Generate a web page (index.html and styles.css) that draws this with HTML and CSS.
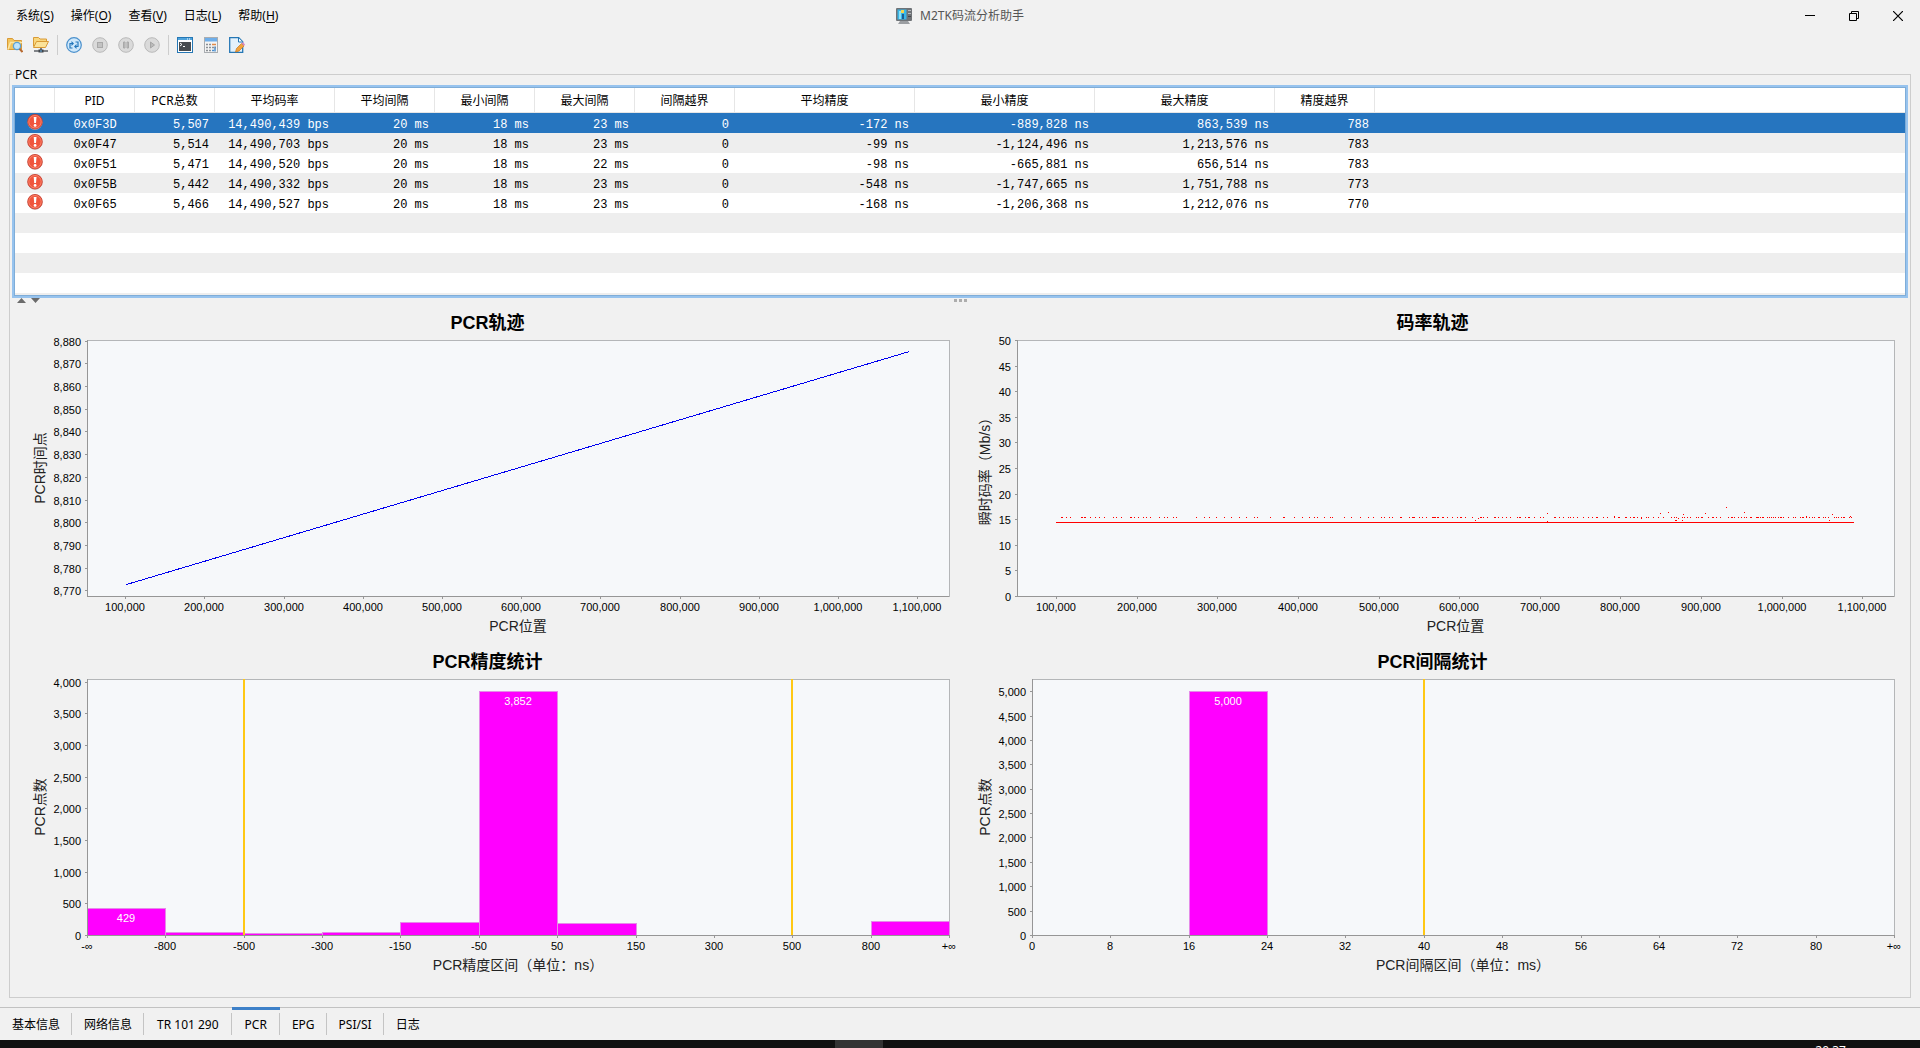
FILE: index.html
```html
<!DOCTYPE html>
<html lang="zh-CN">
<head>
<meta charset="utf-8">
<title>M2TK码流分析助手</title>
<link rel="stylesheet" href="styles.css">
</head>
<body>
<header class="titlebar">
  <nav class="menu" aria-label="菜单">
    <button type="button">系统(<u>S</u>)</button>
    <button type="button">操作(<u>O</u>)</button>
    <button type="button">查看(<u>V</u>)</button>
    <button type="button">日志(<u>L</u>)</button>
    <button type="button">帮助(<u>H</u>)</button>
  </nav>
  <h1 class="app-title">
    <svg width="16" height="16" viewBox="0 0 16 16" aria-hidden="true">
      <rect x="0" y="0" width="16" height="13" rx="1" fill="#6f7377"/>
      <rect x="1.500" y="1.500" width="9" height="10" fill="#38b6e8"/>
      <rect x="3" y="3" width="2" height="8" fill="#8be0f7"/><rect x="5" y="2" width="3" height="3" fill="#f2d34c"/><rect x="6" y="6" width="2" height="5" fill="#1a5e93"/>
      <rect x="12" y="2" width="3" height="1" fill="#b8bcc0"/><rect x="12" y="5" width="3" height="1" fill="#b8bcc0"/><rect x="12" y="8" width="3" height="1" fill="#45494d"/>
      <path d="M4 13h8l2 3H2z" fill="#9b9ea2"/>
    </svg>
    <span>M2TK码流分析助手</span>
  </h1>
  <div class="window-controls">
    <button type="button" aria-label="最小化"><svg width="10" height="10" viewBox="0 0 10 10"><path d="M0 4.500h10" stroke="#000"/></svg></button>
    <button type="button" aria-label="还原"><svg width="10" height="10" viewBox="0 0 10 10" fill="none" stroke="#000"><path d="M.5 2.500h7v7h-7zM2.500 2.500v-2h7v7h-2"/></svg></button>
    <button type="button" aria-label="关闭"><svg width="10" height="10" viewBox="0 0 10 10"><path d="M0 0l10 10M10 0L0 10" stroke="#000" stroke-width="1.200"/></svg></button>
  </div>
</header>

<div class="toolbar" role="toolbar" aria-label="工具栏">
  <button type="button" aria-label="打开文件"><svg width="16" height="16" viewBox="0 0 16 16">
    <path d="M.5 12.500v-11h5l1.500 2h7.500v9z" fill="#f3c55d" stroke="#d99a36"/><path d="M1 12.500l2.500-7H15" fill="none" stroke="#fbe7a6" stroke-width="1.500"/>
    <circle cx="10" cy="9" r="3.600" fill="#bfe4fa" stroke="#5ba1d4" stroke-width="1.300"/><path d="M12.500 11.800l3 3.200" stroke="#b86b32" stroke-width="2"/></svg></button>
  <button type="button" aria-label="打开网络流"><svg width="16" height="16" viewBox="0 0 16 16">
    <path d="M.5 9.500v-9h5L7 2h6.500v2" fill="#f8d77e" stroke="#d99a36"/><path d="M.5 10.500l3-6h12l-3 6z" fill="#fbe39a" stroke="#d99a36"/>
    <path d="M8 11v3M1 14h14" stroke="#5c6066" stroke-width="1.600"/><rect x="5.500" y="12.500" width="5" height="3" fill="#3e4349"/><path d="M7 14h2" stroke="#6db5ea"/></svg></button>
  <span class="divider"></span>
  <button type="button" aria-label="重新分析"><svg width="16" height="16" viewBox="0 0 16 16">
    <circle cx="8" cy="8" r="7.300" fill="#cfe8fb" stroke="#4a90cc" stroke-width="1.200"/>
    <path d="M6.500 11H4V6.500h2.500M9.500 5H12v4.500H9.500" fill="none" stroke="#2477bb" stroke-width="1.200"/><path d="M5.500 4l2.500 2.500L5.500 9zM10.500 7L8 9.500l2.500 2.500z" fill="#2477bb"/></svg></button>
  <button type="button" aria-label="停止" disabled><svg width="16" height="16" viewBox="0 0 16 16">
    <circle cx="8" cy="8" r="7.300" fill="#dadada" stroke="#b9b9b9"/><rect x="5.500" y="5.500" width="5" height="5" fill="#c2c2c2" stroke="#a8a8a8"/></svg></button>
  <button type="button" aria-label="暂停" disabled><svg width="16" height="16" viewBox="0 0 16 16">
    <circle cx="8" cy="8" r="7.300" fill="#dadada" stroke="#b9b9b9"/><path d="M5.500 5h1.500v6H5.500zM9 5h1.500v6H9z" fill="#c2c2c2" stroke="#a8a8a8"/></svg></button>
  <button type="button" aria-label="开始" disabled><svg width="16" height="16" viewBox="0 0 16 16">
    <circle cx="8" cy="8" r="7.300" fill="#dadada" stroke="#b9b9b9"/><path d="M6.500 5l4 3-4 3z" fill="#bababa" stroke="#a5a5a5"/></svg></button>
  <span class="divider"></span>
  <button type="button" aria-label="终端"><svg width="16" height="16" viewBox="0 0 16 16">
    <rect x=".5" y=".5" width="15" height="15" fill="#fff" stroke="#2577b5"/><rect x="1" y="1" width="14" height="2" fill="#4fa3dc"/><path d="M10 2h1M12 2h1" stroke="#fff"/>
    <rect x="2" y="5" width="12" height="9" fill="#484c50"/><path d="M3 6l2 1.500L3 9M6 9.500h2" fill="none" stroke="#fff"/></svg></button>
  <button type="button" aria-label="计算器"><svg width="16" height="16" viewBox="0 0 16 16">
    <rect x="1.500" y=".5" width="13" height="15" fill="#f4f4f4" stroke="#a9adb1"/><rect x="2" y="1" width="12" height="3.500" fill="#6eaeea"/>
    <path d="M3 7.500h2M6 7.500h2M3 10.500h2M6 10.500h2M3 13.500h2M6 13.500h2M9 10.500h2" stroke="#8a8f94" stroke-width="1.500"/><path d="M9 7.500h4M12 10.500h1" stroke="#e08a4a" stroke-width="1.500"/><path d="M9 13.500h2M12 9.500v5" stroke="#4a8fd0" stroke-width="1.500"/></svg></button>
  <button type="button" aria-label="编辑"><svg width="16" height="16" viewBox="0 0 16 16">
    <path d="M.7.7h9l4 4v10.600h-13z" fill="#e4f1fb" stroke="#2577b5" stroke-width="1.300"/><path d="M9.500 1v4h4" fill="#fff" stroke="#2577b5"/>
    <path d="M6.500 15l1-3.500 5-5 2.500 2.500L10 14z" fill="#f2a33c" stroke="#c9761c" stroke-width=".7"/><path d="M12.500 6.500L14 5l2 2.500L15 9z" fill="#d98bc0"/></svg></button>
</div>

<section class="group">
  <h2>PCR</h2>
  <div class="scroll-pane">
    <table class="pcr-table">
      <colgroup>
        <col class="c-icon"><col class="c-id"><col class="c-id"><col class="c-rate"><col class="c-mid"><col class="c-mid"><col class="c-mid"><col class="c-mid"><col class="c-wide"><col class="c-wide"><col class="c-wide"><col class="c-mid"><col>
      </colgroup>
      <thead>
        <tr><th></th><th>PID</th><th>PCR总数</th><th>平均码率</th><th>平均间隔</th><th>最小间隔</th><th>最大间隔</th><th>间隔越界</th><th>平均精度</th><th>最小精度</th><th>最大精度</th><th>精度越界</th><th></th></tr>
      </thead>
      <tbody>
        <tr class="selected"><td><svg class="alert" viewBox="0 0 16 16"><use href="#alert"/></svg></td><td>0x0F3D</td><td>5,507</td><td>14,490,439 bps</td><td>20 ms</td><td>18 ms</td><td>23 ms</td><td>0</td><td>-172 ns</td><td>-889,828 ns</td><td>863,539 ns</td><td>788</td><td></td></tr>
        <tr><td><svg class="alert" viewBox="0 0 16 16"><use href="#alert"/></svg></td><td>0x0F47</td><td>5,514</td><td>14,490,703 bps</td><td>20 ms</td><td>18 ms</td><td>23 ms</td><td>0</td><td>-99 ns</td><td>-1,124,496 ns</td><td>1,213,576 ns</td><td>783</td><td></td></tr>
        <tr><td><svg class="alert" viewBox="0 0 16 16"><use href="#alert"/></svg></td><td>0x0F51</td><td>5,471</td><td>14,490,520 bps</td><td>20 ms</td><td>18 ms</td><td>22 ms</td><td>0</td><td>-98 ns</td><td>-665,881 ns</td><td>656,514 ns</td><td>783</td><td></td></tr>
        <tr><td><svg class="alert" viewBox="0 0 16 16"><use href="#alert"/></svg></td><td>0x0F5B</td><td>5,442</td><td>14,490,332 bps</td><td>20 ms</td><td>18 ms</td><td>23 ms</td><td>0</td><td>-548 ns</td><td>-1,747,665 ns</td><td>1,751,788 ns</td><td>773</td><td></td></tr>
        <tr><td><svg class="alert" viewBox="0 0 16 16"><use href="#alert"/></svg></td><td>0x0F65</td><td>5,466</td><td>14,490,527 bps</td><td>20 ms</td><td>18 ms</td><td>23 ms</td><td>0</td><td>-168 ns</td><td>-1,206,368 ns</td><td>1,212,076 ns</td><td>770</td><td></td></tr>
        <tr><td colspan="13"></td></tr>
        <tr><td colspan="13"></td></tr>
        <tr><td colspan="13"></td></tr>
        <tr><td colspan="13"></td></tr>
      </tbody>
    </table>
  </div>
  <div class="splitter">
    <svg class="arrows" width="24" height="5" viewBox="0 0 24 5" fill="#6b6b6b" aria-hidden="true"><path d="M0 5l4.500-5L9 5zM14 0h9l-4.500 5z"/></svg>
    <svg width="13" height="3" viewBox="0 0 13 3" fill="#adadad" aria-hidden="true"><path d="M0 0h3v3H0zM5 0h3v3H5zM10 0h3v3h-3z"/></svg>
    <span></span>
  </div>
  <div class="charts">
    <svg class="chart" id="chart-track"></svg>
    <svg class="chart" id="chart-rate"></svg>
    <svg class="chart" id="chart-accuracy"></svg>
    <svg class="chart" id="chart-interval"></svg>
  </div>
</section>

<nav class="tabs" aria-label="视图">
  <button type="button">基本信息</button>
  <button type="button">网络信息</button>
  <button type="button" class="latin">TR 101 290</button>
  <button type="button" class="latin active">PCR</button>
  <button type="button">EPG</button>
  <button type="button">PSI/SI</button>
  <button type="button">日志</button>
</nav>
<footer class="taskbar"><span class="task"></span><time>20:37</time></footer>

<svg class="defs" width="0" height="0" aria-hidden="true">
  <symbol id="alert" viewBox="0 0 16 16">
    <circle cx="8" cy="8.300" r="7.500" fill="#c9c4c2"/>
    <circle cx="8" cy="7.700" r="7.300" fill="#f0553d" stroke="#c5392a" stroke-width=".8"/>
    <circle cx="8" cy="7.700" r="6.200" fill="none" stroke="#f98d76" stroke-width=".8"/>
    <path d="M6.700 3h2.800l-.5 6H7.200z" fill="#fff"/><circle cx="8.100" cy="11.400" r="1.400" fill="#fff"/>
  </symbol>
</svg>
<script src="charts.js"></script>
</body>
</html>
```
FILE: styles.css
```css
* { box-sizing: border-box; }
body {
  margin: 0;
  min-height: 100vh;
  display: flex;
  flex-direction: column;
  background: #f1f1f1;
  color: #000;
  font: 12px/16px "Noto Sans", "Noto Sans CJK SC", sans-serif;
}
button {
  margin: 0;
  padding: 0;
  border: 0;
  background: none;
  color: inherit;
  font: inherit;
}

/* title bar */
.titlebar {
  display: grid;
  grid-template-columns: 1fr auto 1fr;
  align-items: center;
  height: 32px;
}
.menu { display: flex; gap: 17px; padding-left: 16px; }
.menu u { text-underline-offset: 2px; }
.app-title {
  display: flex;
  align-items: center;
  gap: 8px;
  margin: 0;
  font-size: 12px;
  font-weight: normal;
  color: #555;
}
.window-controls { display: flex; justify-content: flex-end; }
.window-controls button { display: grid; place-items: center; width: 44px; height: 30px; }

/* toolbar */
.toolbar { display: flex; align-items: center; height: 26px; padding-left: 2px; }
.toolbar button { display: grid; place-items: center; width: 26px; height: 24px; }
.divider { width: 1px; height: 20px; margin: 0 3px; background: #cdcdcd; }

/* group box with its title set into the top border */
.group {
  flex: 1;
  display: flex;
  flex-direction: column;
  min-width: 0;
  margin: 16px 9px 9px;
  padding: 0 2px 17px;
  border: 1px solid #cdcdcd;
}
.group h2 {
  align-self: flex-start;
  height: 16px;
  margin: -8px 0 2px 1px;
  padding: 0 2px;
  background: #f1f1f1;
  font-size: 12px;
  font-weight: normal;
}

.scroll-pane {
  padding: 1px 1px 3px;
  border: 2px solid #97c3ee;
  background: #eee;
  box-shadow: inset 0 0 0 1px #7fadd8;
}
.pcr-table {
  width: 100%;
  table-layout: fixed;
  border-collapse: separate;
  border-spacing: 0;
  background: #fff;
}
.c-icon { width: 40px; }
.c-id { width: 80px; }
.c-rate { width: 120px; }
.c-mid { width: 100px; }
.c-wide { width: 180px; }
.pcr-table th {
  height: 25px;
  padding: 2px 0 0;
  border-right: 1px solid #e6e6e6;
  border-bottom: 1px solid #e6e6e6;
  font-weight: normal;
  text-align: center;
}
.pcr-table th:last-child { border-right: 0; }
.pcr-table td {
  height: 20px;
  padding: 4px 6px 0 0;
  font: 12px/16px "Liberation Mono", monospace;
  text-align: right;
  white-space: nowrap;
}
.pcr-table td:nth-child(1) { padding: 0; text-align: center; }
.pcr-table td:nth-child(2) { padding-right: 0; text-align: center; }
.pcr-table tbody tr:nth-child(even) { background: #eee; }
.pcr-table .selected { background: #2675bf; color: #fff; }
.alert { display: block; width: 16px; height: 16px; margin: 0 auto 2px; }

.splitter {
  display: grid;
  grid-template-columns: 1fr auto 1fr;
  align-items: center;
  height: 5px;
}
.arrows { margin-left: 5px; }

/* charts */
.charts {
  flex: 1;
  display: grid;
  grid-template-columns: repeat(2, minmax(0, 1fr));
  grid-template-rows: repeat(2, minmax(240px, 1fr));
  padding: 0 5px 0 2px;
}
.chart {
  width: 100%;
  height: 100%;
  min-height: 0;
  font-family: "Liberation Sans", "Noto Sans CJK SC", sans-serif;
}
.chart text { text-anchor: middle; }
.chart .title { font-size: 18px; font-weight: bold; }
.chart .axis-label { font-size: 14px; fill: #222; }
.chart .tick { font-size: 11px; }
.chart .tick-y { text-anchor: end; }
.chart .value { font-size: 11px; fill: #fff; }
.chart .plot { fill: #f6f8fa; stroke: #b4b6b8; }
.chart .axis { fill: none; stroke: #969696; }
.chart .bar { fill: #f0f; stroke: #e58be8; }
.chart .limit { stroke: #ffc814; stroke-width: 2; }
.chart .line { fill: none; stroke: #0000f0; }
.chart .sample { fill: #f00; }
.chart rect, .chart .axis, .chart .limit, .chart .line { shape-rendering: crispEdges; }

/* bottom tabs */
.tabs {
  display: flex;
  height: 33px;
  border-top: 1px solid #c2c2c2;
}
.tabs button { position: relative; padding: 0 12px; margin-top: -1px; border-top: 3px solid transparent; }
.tabs button.latin { padding: 0 13px; }
.tabs button.active { border-top-color: #3d80c8; }
.tabs button:not(:last-child)::after {
  content: "";
  position: absolute;
  top: 3px;
  right: 0;
  width: 1px;
  height: 22px;
  background: #c4c4c4;
}
.taskbar {
  position: relative;
  display: flex;
  justify-content: flex-end;
  height: 8px;
  padding-right: 74px;
  overflow: hidden;
  background: #101010;
  color: #fff;
}
.taskbar time { margin-top: 3px; }
.task { position: absolute; left: 835px; top: 0; width: 48px; height: 8px; background: #333; }
.defs { position: absolute; }
```
FILE: charts.js
```js
const NS = 'http://www.w3.org/2000/svg';

// Samples that rise above the steady bit rate: one entry per 414 packets.
const BUCKET = 414.08;
const BURSTS = [
  { start: -19900, level: 15.4, hits: [304,307,319,331,365,368,374,376,391,406,418,433,460,469,484,511,514,523,535,550,559,571,598,613,622,640,649,709,733,748,769,793,814,838,859,883,892,931,970,973,1003,1027,1048,1063,1072,1093,1111,1117,1153,1174,1201,1225,1240,1264,1273,1288,1297,1321,1324,1348,1357,1363,1378,1387,1399,1417,1423,1432] },
  { start: 526700, level: 15.4, hits: [28,38,43,58,67,79,97,103,112,124,127,139,154,169,178,181,193,214,239,241,247,259,281,284,292,304,316,328,349,355,358,373,382,385,400,418,427,460,463,475,487,502,508,517,529,547,562,574,586,590,607,619,640,652,655,673,676,688,697,700,711,721,736,742,757,772,787,811,820,826,844,850,859,868,886,892,901,904,922,934,937,946,958,982,991,994,1000,1012,1021,1030,1036,1048,1051,1066,1069,1072,1078,1084,1087,1099,1105,1111,1117,1123,1132,1138,1141,1147,1162,1177,1183,1198,1204,1207,1216,1225,1234,1240,1252,1255,1267,1273,1282,1300,1306,1312,1321,1327,1330,1345,1351] },
  { start: 526700, level: 16.2, hits: [439,778,913] },
  { start: 526700, level: 16.4, hits: [802,1030] },
  { start: 526700, level: 17.4, hits: [976] },
  { start: 526700, level: 16.0, hits: [847,1294] },
  { start: 526700, level: 15.6, hits: [640,1216,1348] },
  { start: 526700, level: 15.2, hits: [232,721,832] },
  { start: 526700, level: 14.8, hits: [223,823,826,844,1285] },
  { start: 526700, level: 14.6, hits: [439] }
];

const range = (from, to, step) => {
  const out = [];
  for (let v = from; v <= to; v += step) out.push(v);
  return out;
};
const num = v => v.toLocaleString('en-US');

const charts = [
  { id: 'chart-track', title: 'PCR轨迹', xLabel: 'PCR位置', yLabel: 'PCR时间点', left: 73,
    x: [51700, 1140000], y: [8767.5, 8880.3], xTicks: range(100000, 1100000, 100000), yTicks: range(8770, 8880, 10),
    line: [[101000, 8772.7], [1089900, 8875.3]] },
  { id: 'chart-rate', title: '码率轨迹', xLabel: 'PCR位置', yLabel: '瞬时码率（Mb/s）', left: 58,
    x: [51300, 1139500], y: [0, 50], xTicks: range(100000, 1100000, 100000), yTicks: range(0, 50, 5),
    steady: [100000, 1090400, 14.4], bursts: BURSTS },
  { id: 'chart-accuracy', title: 'PCR精度统计', xLabel: 'PCR精度区间（单位：ns）', yLabel: 'PCR点数', left: 73,
    x: [0, 11], y: [0, 4045], yTicks: range(0, 4000, 500),
    bins: ['-∞', '-800', '-500', '-300', '-150', '-50', '50', '150', '300', '500', '800', '+∞'],
    values: [429, 45, 25, 45, 200, 3852, 190, 0, 0, 0, 225], limits: [2, 9] },
  { id: 'chart-interval', title: 'PCR间隔统计', xLabel: 'PCR间隔区间（单位：ms）', yLabel: 'PCR点数', left: 73,
    x: [0, 11], y: [0, 5250], yTicks: range(0, 5000, 500),
    bins: ['0', '8', '16', '24', '32', '40', '48', '56', '64', '72', '80', '+∞'],
    values: [0, 0, 5000, 0, 0, 0, 0, 0, 0, 0, 0], limits: [5] }
];

function draw(c) {
  const svg = document.getElementById(c.id);
  svg.replaceChildren();
  const W = Math.round(svg.clientWidth), H = Math.round(svg.clientHeight);
  const L = c.left, T = 37, R = W - 10, B = H - 46;
  const add = (name, attrs, text) => {
    const el = document.createElementNS(NS, name);
    for (const k in attrs) el.setAttribute(k, attrs[k]);
    if (text) el.textContent = text;
    svg.append(el);
  };
  const px = v => Math.round(L + (v - c.x[0]) / (c.x[1] - c.x[0]) * (R - L));
  const py = v => Math.round(B - (v - c.y[0]) / (c.y[1] - c.y[0]) * (B - T));
  const mid = (L + R) / 2;

  add('text', { class: 'title', x: W / 2 + 1, y: 26 }, c.title);
  add('rect', { class: 'plot', x: L + .5, y: T + .5, width: R - L, height: B - T });

  (c.values || []).forEach((v, i) => {
    if (!v) return;
    add('rect', { class: 'bar', x: px(i) + .5, y: py(v) + .5, width: px(i + 1) - px(i), height: B - py(v) });
    if (v > 400) add('text', { class: 'value', x: px(i + .5), y: py(v) + 14 }, num(v));
  });
  (c.limits || []).forEach(v => add('path', { class: 'limit', d: `M${px(v)} ${T}V${B}` }));

  if (c.line) {
    const [a, b] = c.line;
    add('path', { class: 'line', d: `M${px(a[0]) + .5} ${py(a[1]) + .5}L${px(b[0]) + .5} ${py(b[1]) + .5}` });
  }
  if (c.steady) {
    const [from, to, v] = c.steady;
    add('rect', { class: 'sample', x: px(from), y: py(v), width: px(to) - px(from), height: 1 });
    c.bursts.forEach(g => g.hits.forEach(h =>
      add('rect', { class: 'sample', x: px(g.start + h * BUCKET), y: py(g.level), width: 1, height: 1 })));
  }

  let axis = `M${L + .5} ${T}V${B + .5}H${R}`;
  c.yTicks.forEach(v => {
    axis += `M${L - 2} ${py(v) + .5}h2`;
    add('text', { class: 'tick tick-y', x: L - 6, y: py(v) + 5 }, num(v));
  });
  const xs = c.bins ? c.bins.map((t, i) => [i, t]) : c.xTicks.map(v => [v, num(v)]);
  xs.forEach(([v, t]) => {
    axis += `M${px(v) + .5} ${B}v3`;
    add('text', { class: 'tick', x: px(v), y: B + 15 }, t);
  });
  add('path', { class: 'axis', d: axis });
  add('text', { class: 'axis-label', x: mid, y: B + 35 }, c.xLabel);
  const cy = (T + B) / 2;
  add('text', { class: 'axis-label', x: 31, y: cy, transform: `rotate(-90 31 ${cy})` }, c.yLabel);
}

const drawAll = () => charts.forEach(draw);
drawAll();
addEventListener('resize', drawAll);
```
